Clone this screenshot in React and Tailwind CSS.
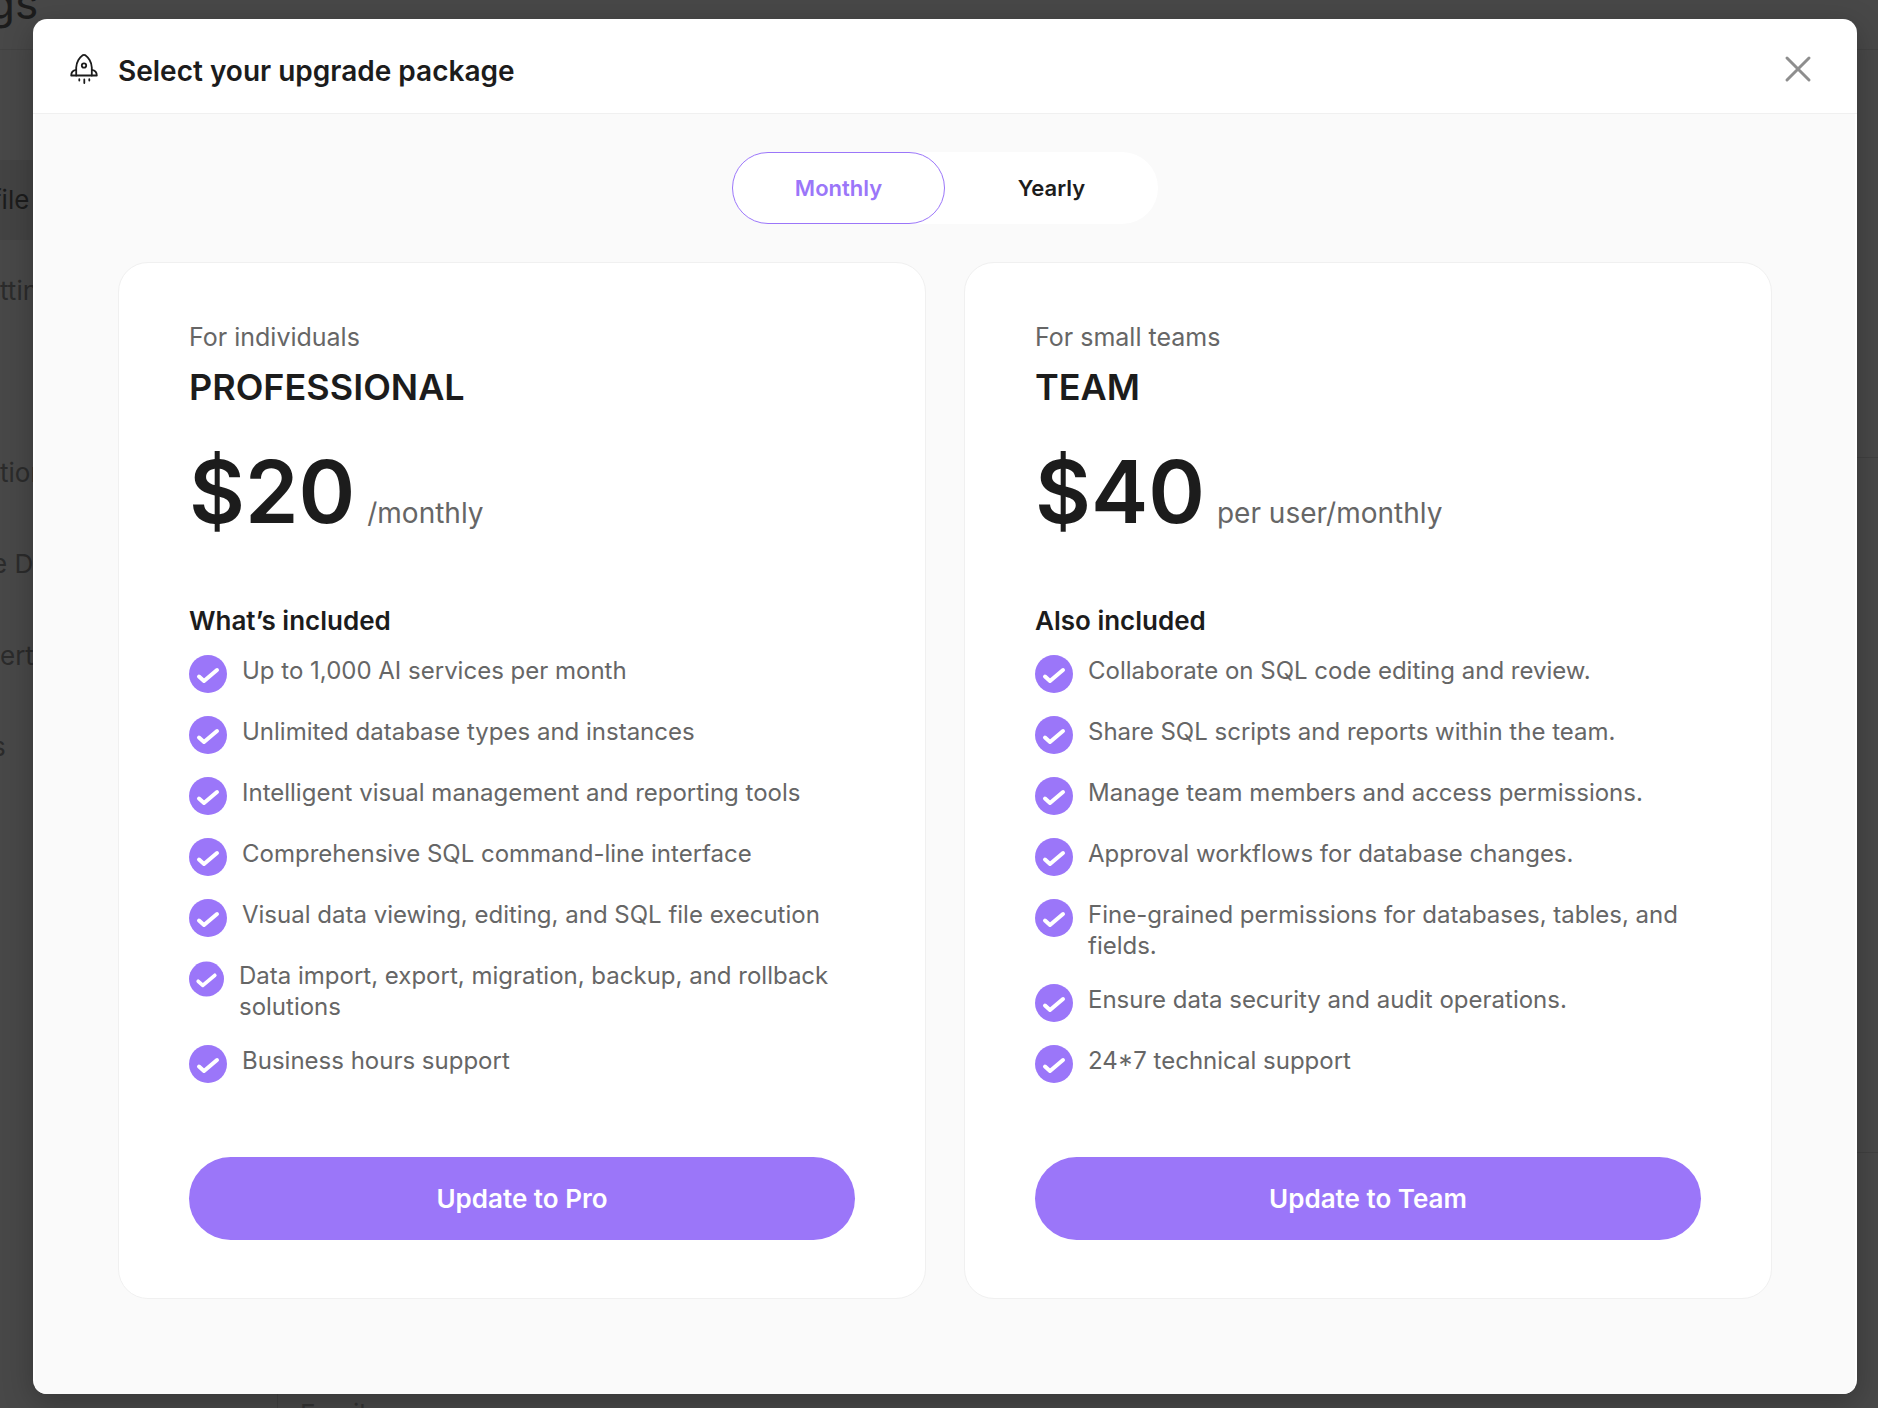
import { useState } from "react";

const plans = [
  {
    audience: "For individuals",
    name: "PROFESSIONAL",
    price: "$20",
    unit: "/monthly",
    heading: "What’s included",
    action: "Update to Pro",
    features: [
      { text: "Up to 1,000 AI services per month" },
      { text: "Unlimited database types and instances" },
      { text: "Intelligent visual management and reporting tools" },
      { text: "Comprehensive SQL command-line interface" },
      { text: "Visual data viewing, editing, and SQL file execution" },
      { text: "Data import, export, migration, backup, and rollback solutions", compact: true },
      { text: "Business hours support" },
    ],
  },
  {
    audience: "For small teams",
    name: "TEAM",
    price: "$40",
    unit: "per user/monthly",
    heading: "Also included",
    action: "Update to Team",
    features: [
      { text: "Collaborate on SQL code editing and review." },
      { text: "Share SQL scripts and reports within the team." },
      { text: "Manage team members and access permissions." },
      { text: "Approval workflows for database changes." },
      { text: "Fine-grained permissions for databases, tables, and fields." },
      { text: "Ensure data security and audit operations." },
      { text: "24*7 technical support" },
    ],
  },
];

function Rocket() {
  return (
    <svg viewBox="0 0 28 30" className="h-[30px] w-7 shrink-0" fill="none" stroke="#1c1c1c" strokeWidth="1.8" strokeLinejoin="round" strokeLinecap="round" aria-hidden="true">
      <path d="M6.200 21.500V13.500C6.200 8 10 3 12.400 1.400Q14 0.500 15.600 1.400C18 3 21.800 8 21.800 13.500V21.500" />
      <path d="M6.200 15.800C3 16.300 1.200 18 1.200 21.500H26.800C26.800 18 25 16.300 21.800 15.800" />
      <circle cx="14" cy="11.500" r="2.200" />
      <path d="M9.300 25.200V26.600M14.300 25.500V29M19.300 25.200V26.600" />
    </svg>
  );
}

function Check({ compact }) {
  return (
    <svg viewBox="0 0 38 38" className={compact ? "h-[38px] w-[35px] shrink-0" : "h-[38px] w-[38px] shrink-0"} aria-hidden="true">
      <circle cx="19" cy="19" r="19" fill="#9b76f9" />
      <path d="M10 21.500L15 26L28 15" fill="none" stroke="#fff" strokeWidth="4" strokeLinecap="round" strokeLinejoin="round" />
    </svg>
  );
}

function Plan({ plan }) {
  return (
    <section className="flex flex-col rounded-[30px] border border-[#f0f0f0] bg-white px-[70px] pt-[58px] pb-[58px]">
      <p className="text-[25px] leading-8 text-[#666]">{plan.audience}</p>
      <h2 className="mt-4 text-[36px] leading-9 font-semibold">{plan.name}</h2>
      <p className="mt-[37px] flex items-baseline gap-3">
        <span className="text-[86px] leading-[100px] font-semibold">{plan.price}</span>
        <span className="text-[28px] leading-9 text-[#666]">{plan.unit}</span>
      </p>
      <h3 className="mt-[63px] text-[26px] leading-8 font-semibold">{plan.heading}</h3>
      <ul className="mt-[18px] flex flex-col gap-[23px]">
        {plan.features.map((f) => (
          <li key={f.text} className="flex min-h-[38px] items-start gap-[15px] text-2xl leading-[31px] text-[#666]">
            <Check compact={f.compact} />
            <span>{f.text}</span>
          </li>
        ))}
      </ul>
      <button type="button" className="mt-[74px] h-[83px] rounded-full bg-[#9b76f9] text-[26px] font-semibold text-white">
        {plan.action}
      </button>
    </section>
  );
}

function Backdrop() {
  return (
    <div aria-hidden="true" className="absolute inset-0 overflow-hidden bg-[#484848] text-[26px] leading-8 text-[#2b2b2b]">
      <div className="flex h-[50px] items-end border-b border-[#424242]">
        <span className="-ml-3 pb-5 text-[44px] leading-[52px] text-[#1c1c1c]">gs</span>
      </div>
      <div className="flex">
        <div className="w-[277px] pt-[110px]">
          <div className="flex h-20 items-center bg-[#434343] text-[#1c1c1c]">
            <span className="-ml-2">file</span>
          </div>
          <div className="mt-[35px]">tting</div>
          <div className="mt-[150px]">tion</div>
          <div className="mt-[59px] -ml-2">e Defa</div>
          <div className="mt-[60px]">ert</div>
          <div className="mt-[59px] -ml-2">s</div>
        </div>
        <div className="flex-1 border-l border-[#404040]">
          <div className="h-[408px] border-b border-[#404040]" />
          <div className="h-[695px] border-b border-[#404040]" />
          <div className="pt-[245px] pl-[22px] text-[#333]">Email</div>
        </div>
      </div>
    </div>
  );
}

export default function App() {
  const [period, setPeriod] = useState("Monthly");
  return (
    <div className="relative min-h-screen overflow-hidden pt-[19px] pr-[21px] pb-[14px] pl-[33px] font-['Inter',sans-serif] text-[#1c1c1c]">
      <Backdrop />
      <main role="dialog" aria-labelledby="dialog-title" className="relative overflow-hidden rounded-[14px] bg-white shadow-[0_8px_30px_rgba(0,0,0,0.25)]">
        <header className="flex h-[95px] items-center border-b border-[#f0f0f0] pt-[5px] pr-[45px] pl-[37px]">
          <Rocket />
          <h1 id="dialog-title" className="ml-5 pt-1 text-[28px] leading-9 font-semibold">Select your upgrade package</h1>
          <button type="button" aria-label="Close" className="ml-auto">
            <svg viewBox="0 0 28 28" className="size-7" fill="none" stroke="#8e8e8e" strokeWidth="3" strokeLinecap="round" aria-hidden="true">
              <path d="M3 3L25 25M25 3L3 25" />
            </svg>
          </button>
        </header>
        <div className="mx-0.5 bg-[#fafafa] px-[83px] pt-[38px] pb-[95px]">
          <div className="mx-auto flex w-[426px] rounded-full bg-white">
            {["Monthly", "Yearly"].map((p) => (
              <button
                key={p}
                type="button"
                aria-pressed={period === p}
                onClick={() => setPeriod(p)}
                className={
                  period === p
                    ? "h-[72px] flex-1 rounded-full border border-[#9b76f9] text-[22px] font-semibold text-[#9b76f9]"
                    : "h-[72px] flex-1 rounded-full border border-transparent text-[22px] font-semibold"
                }
              >
                {p}
              </button>
            ))}
          </div>
          <div className="mt-[38px] grid grid-cols-2 gap-[38px]">
            {plans.map((plan) => (
              <Plan key={plan.name} plan={plan} />
            ))}
          </div>
        </div>
      </main>
    </div>
  );
}
